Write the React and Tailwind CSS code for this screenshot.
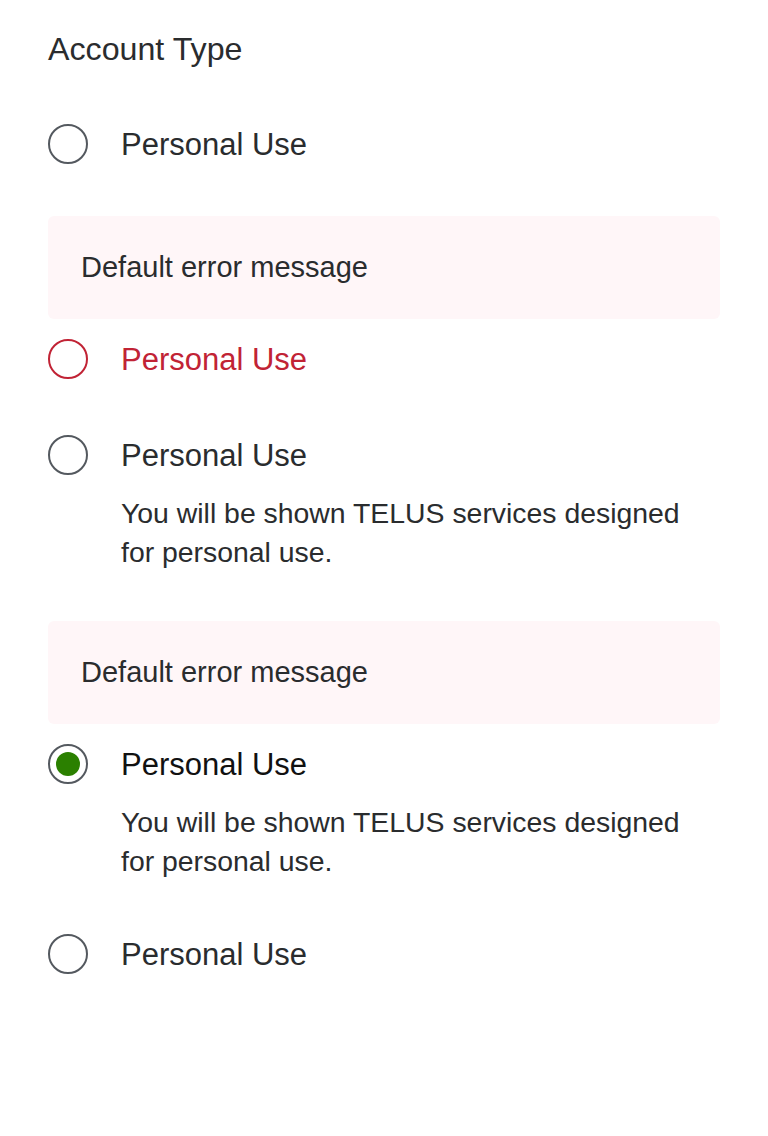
import React from 'react'

const font = { fontFamily: '"Liberation Sans", Arial, sans-serif' }

function Radio({ state }){
  if(state==='error') return (
    <span className="w-10 h-10 shrink-0 rounded-full border-2 border-[#c12335] bg-white"/>
  )
  if(state==='checked') return (
    <span className="w-10 h-10 shrink-0 rounded-full border-2 border-[#54595f] bg-white flex items-center justify-center">
      <span className="w-6 h-6 rounded-full bg-[#2b8000]"/>
    </span>
  )
  return <span className="w-10 h-10 shrink-0 rounded-full border-2 border-[#54595f] bg-white"/>
}

function Option({ state, description, className }){
  const labelColor = state==='error' ? 'text-[#c12335]' : state==='checked' ? 'text-[#111111]' : 'text-[#2a2c2e]'
  return (
    <div className={`flex gap-[33px] ${className}`}>
      <Radio state={state}/>
      <div className="flex flex-col">
        <div className={`h-10 flex items-center pt-[2px] text-[31px] leading-[40px] ${labelColor}`}>Personal Use</div>
        {description && (
          <p className="mt-[19px] text-[28.4px] leading-[39px] text-[#2a2c2e] max-w-[580px]">
            You will be shown TELUS services designed for personal use.
          </p>
        )}
      </div>
    </div>
  )
}

function ErrorBox({ className }){
  return (
    <div className={`rounded-md bg-[#fff6f8] px-[33px] py-[32px] ${className}`}>
      <p className="text-[29px] leading-[39px] text-[#2a2c2e]">Default error message</p>
    </div>
  )
}

export default function App(){
  return (
    <div className="min-h-[1136px] bg-white px-12 pt-[29px]" style={font}>
      <h2 className="text-[32.2px] leading-[40px] font-normal text-[#2a2c2e]">Account Type</h2>
      <Option className="mt-[55px]"/>
      <ErrorBox className="mt-[52px]"/>
      <Option state="error" className="mt-[20px]"/>
      <Option description className="mt-[56px]"/>
      <ErrorBox className="mt-[49px]"/>
      <Option state="checked" description className="mt-[20px]"/>
      <Option className="mt-[53px]"/>
    </div>
  )
}
